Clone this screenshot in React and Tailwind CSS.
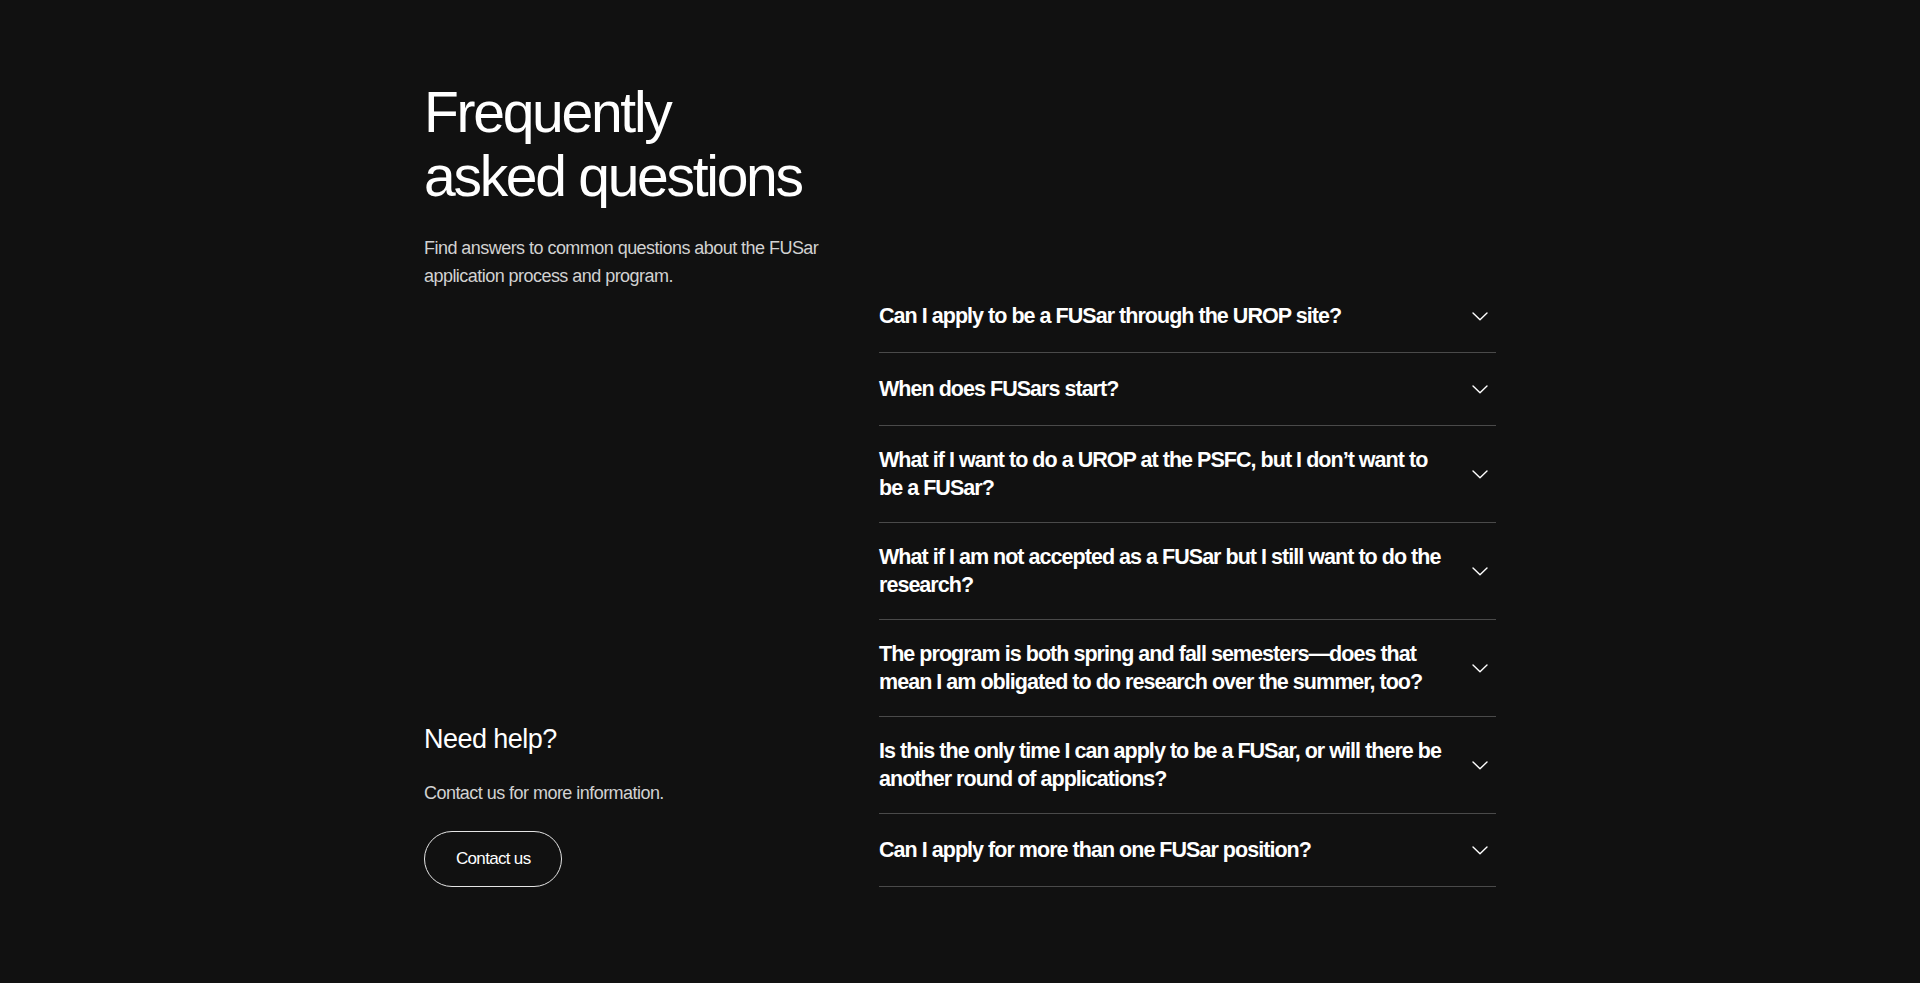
import React from 'react';

const QUESTIONS = [
  'Can I apply to be a FUSar through the UROP site?',
  'When does FUSars start?',
  'What if I want to do a UROP at the PSFC, but I don’t want to be a FUSar?',
  'What if I am not accepted as a FUSar but I still want to do the research?',
  'The program is both spring and fall semesters—does that mean I am obligated to do research over the summer, too?',
  'Is this the only time I can apply to be a FUSar, or will there be another round of applications?',
  'Can I apply for more than one FUSar position?',
];

function Chevron() {
  return (
    <svg width="16" height="9" viewBox="0 0 16 9" fill="none" aria-hidden="true">
      <polyline points="1,1 8,7.8 15,1" stroke="#ffffff" strokeWidth="1.4" strokeLinecap="round" strokeLinejoin="round" />
    </svg>
  );
}

function FaqRow({ question }) {
  return (
    <button
      type="button"
      className="flex w-full items-center gap-4 border-b border-[#4a4a4a] py-5 text-left"
    >
      <span className="flex-1 text-[21.5px] font-bold leading-[28px] tracking-[-0.045em] text-white">
        {question}
      </span>
      <span className="flex h-8 w-8 shrink-0 items-center justify-center">
        <Chevron />
      </span>
    </button>
  );
}

export default function App() {
  return (
    <div className="min-h-screen w-full bg-[#111111] font-['Liberation_Sans',Arial,sans-serif]">
      <section className="mx-auto flex w-[1072px] pt-[80px] pb-[95px]">
        {/* left: title + help */}
        <div className="flex w-[455px] shrink-0 flex-col justify-between">
          <div>
            <h2 className="text-[57px] font-normal leading-[64px] tracking-[-0.04em] text-white">
              Frequently
              <br />
              asked questions
            </h2>
            <p className="mt-[26px] max-w-[410px] text-[18px] leading-[28px] tracking-[-0.03em] text-[#d2d2d2]">
              Find answers to common questions about the FUSar application process and program.
            </p>
          </div>

          <div>
            <h3 className="text-[27px] font-normal leading-[32px] tracking-[-0.02em] text-white">
              Need help?
            </h3>
            <p className="mt-6 text-[18px] leading-[28px] tracking-[-0.03em] text-[#d2d2d2]">
              Contact us for more information.
            </p>
            <button
              type="button"
              className="mt-6 flex h-14 items-center rounded-full border border-[#e5e5e5] px-[31px] text-[17px] tracking-[-0.04em] text-white"
            >
              Contact us
            </button>
          </div>
        </div>

        {/* right: accordion list */}
        <div className="flex-1 pt-[200px]">
          {QUESTIONS.map((q) => (
            <FaqRow key={q} question={q} />
          ))}
        </div>
      </section>
    </div>
  );
}
